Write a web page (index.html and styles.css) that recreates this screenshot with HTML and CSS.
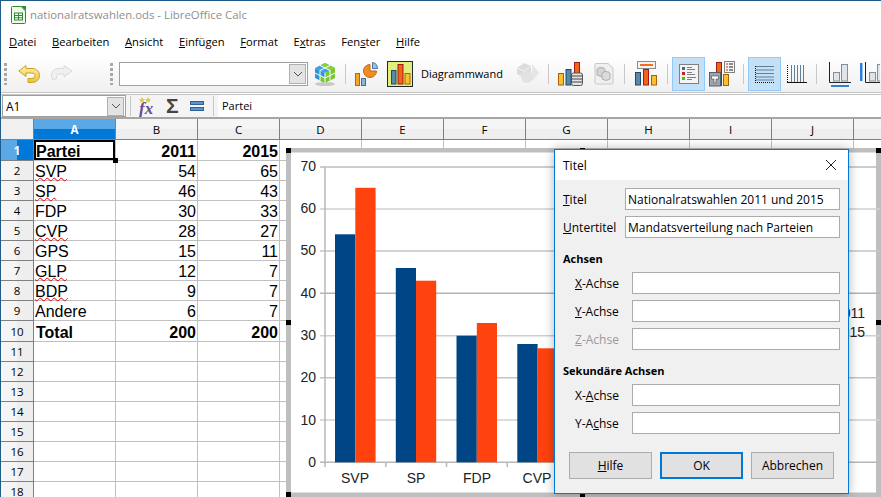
FILE: index.html
```html
<!DOCTYPE html>
<html lang="de">
<head>
    <meta charset="UTF-8">
    <title>nationalratswahlen.ods - LibreOffice Calc</title>
    <link rel="stylesheet" href="styles.css">
</head>
<body>
<div class="window">
    <div class="titlebar">
        <svg width="18" height="20" viewBox="0 0 18 20" class="app-icon">
            <path d="M1.5 2.5 Q1.5 1.5 2.5 1.5 H11 L15.5 6 V17.5 Q15.5 18.5 14.5 18.5 H2.5 Q1.5 18.5 1.5 17.5 Z" fill="#f2f8ee" stroke="#2f8a2f"/>
            <path d="M11 1 L16 1 L16 6 Z" fill="#2f8a2f"/>
            <rect x="4.5" y="8" width="8" height="7" fill="#fff" stroke="#2f8a2f"/>
            <path d="M4.5 10.5 H12.5 M4.5 12.8 H12.5 M8.5 8 V15" stroke="#2f8a2f"/>
        </svg>
        <span>nationalratswahlen.ods - LibreOffice Calc</span>
    </div>

    <div class="menubar">
        <span class="menu-item menu-datei"><u>D</u>atei</span>
        <span class="menu-item"><u>B</u>earbeiten</span>
        <span class="menu-item"><u>A</u>nsicht</span>
        <span class="menu-item"><u>E</u>infügen</span>
        <span class="menu-item"><u>F</u>ormat</span>
        <span class="menu-item">E<u>x</u>tras</span>
        <span class="menu-item">Fen<u>s</u>ter</span>
        <span class="menu-item"><u>H</u>ilfe</span>
    </div>

    <div class="toolbar">
        <span class="grip m3"></span>
        <svg class="m11" width="22" height="26" viewBox="18 60 22 26">
            <defs><linearGradient id="undoFill" x1="0" y1="0" x2="0" y2="1"><stop offset="0" stop-color="#fff2b0"/><stop offset="1" stop-color="#f0c030"/></linearGradient></defs>
            <path d="M18.8 70 L26 64.5 V67.5 H32 C37 67.5 39.5 71 39.5 74.5 C39.5 78.5 36.5 81.5 32 81.5 H28 V77.5 H31.5 C33.5 77.5 35 76 35 74.5 C35 73 33.5 72 31.5 72 H26 V75.5 Z" fill="url(#undoFill)" stroke="#c9a227"/>
        </svg>
        <svg class="m11" width="22" height="26" viewBox="51 60 22 26">
            <path d="M72 70 L64 64.5 V67.5 H59 C54 67.5 51.5 71 51.5 74 C51.5 76 52 78 53 79 L57 77 C56 75 56.5 73 59 73 H64 V76 Z" fill="#f0f0f0" stroke="#d9d9d9"/>
        </svg>
        <span class="grip m37"></span>
        <div class="combo m6">
            <span class="combo-btn"><svg width="10" height="6" viewBox="0 0 10 6"><path d="M1 1 L5 5 L9 1" fill="none" stroke="#555"/></svg></span>
        </div>
        <svg class="m6" width="22" height="26" viewBox="314 60 22 26">
            <ellipse cx="325" cy="83" rx="10" ry="2" fill="#c8c8c8"/>
            <path d="M325 62 L335 67 L325 72 L315 67 Z" fill="#3fa0e0"/>
            <path d="M325 62 L335 67 L330 69.5 L320 64.5 Z" fill="#8ccf3c"/>
            <path d="M315 67 L325 72 V82 L315 77 Z" fill="#2f96dc"/>
            <path d="M320 74.5 L325 77 V82 L320 79.5 Z" fill="#7cc62e"/>
            <path d="M335 67 L325 72 V82 L335 77 Z" fill="#7cc62e"/>
            <path d="M320 64.5 L330 69.5 M330 64.5 L320 69.5 M315 72 L325 77 L335 72 M320 69.5 V79.5 M330 69.5 V79.5 M325 72 V82" stroke="#fff" fill="none"/>
        </svg>
        <span class="sep m9"></span>
        <svg class="m8" width="24" height="26" viewBox="354 60 24 26">
            <rect x="355.5" y="72.5" width="4" height="12" fill="#f5a623" stroke="#c2620c"/>
            <rect x="361.5" y="77.5" width="4" height="7" fill="#8ab6de" stroke="#3a6ea5"/>
            <path d="M370 70 V63.5 A6.5 6.5 0 1 0 376.5 70 Z" fill="#f28c1e" stroke="#c9620e"/>
            <path d="M372.5 67.5 V61.5 A6 6 0 0 1 377.5 67.5 Z" fill="#9cc0e4" stroke="#4a78aa"/>
        </svg>
        <svg class="m9" width="26" height="26" viewBox="387 60 26 26">
            <rect x="387.5" y="60.5" width="25" height="25" fill="#dff07f" stroke="#1c2b2b"/>
            <rect x="391.5" y="69.5" width="4.5" height="13.5" fill="#5d87a8" stroke="#1f4a6e"/>
            <rect x="398" y="63.5" width="5" height="19.5" fill="#f0641e" stroke="#a01c10"/>
            <rect x="405" y="72.5" width="5" height="10.5" fill="#fbc02d" stroke="#a8600c"/>
        </svg>
        <span class="tool-label m8">Diagrammwand</span>
        <svg class="m13" width="24" height="26" viewBox="516 60 24 26">
            <path d="M517 67 L524 62 L531 65 V73 L524 77 L517 73 Z" fill="#dcdcdc"/>
            <path d="M517 67 L524 70 L531 65 M524 70 V77" stroke="#f2f2f2" fill="none"/>
            <path d="M532 63 L539 72 L532 80 Z" fill="#e6e6e6"/>
            <circle cx="527" cy="76" r="6" fill="#e2e2e2"/>
        </svg>
        <span class="sep m8"></span>
        <svg class="m8" width="26" height="26" viewBox="557 60 26 26">
            <rect x="558.5" y="72.5" width="5" height="11.5" fill="#fbc02d" stroke="#a8600c"/>
            <rect x="566" y="68.5" width="5" height="15.5" fill="#5d87a8" stroke="#1f4a6e"/>
            <rect x="574.5" y="61.5" width="5" height="12" fill="#f0641e" stroke="#a01c10"/>
            <rect x="571.5" y="72" width="11" height="12.5" rx="2" fill="#e4e4e4" stroke="#555"/>
            <path d="M571.5 75 H582.5 M571.5 78 H582.5 M571.5 81 H582.5" stroke="#444"/>
        </svg>
        <svg class="m11" width="20" height="26" viewBox="594 60 20 26">
            <path d="M595 63.5 Q595 62.5 596 62.5 H608 L613 67 V82 Q613 83 612 83 H596 Q595 83 595 82 Z" fill="#f0f0f0" stroke="#c8c8c8"/>
            <ellipse cx="601" cy="69" rx="4" ry="2.5" fill="#d4d4d4" stroke="#b0b0b0"/>
            <path d="M597 69 V74 Q601 77 605 74 V69" fill="#d4d4d4" stroke="#b0b0b0"/>
            <ellipse cx="606" cy="73" rx="4" ry="2.5" fill="#dcdcdc" stroke="#b0b0b0"/>
            <path d="M602 73 V78 Q606 81 610 78 V73" fill="#dcdcdc" stroke="#b0b0b0"/>
        </svg>
        <span class="sep m10"></span>
        <svg class="m9" width="24" height="26" viewBox="634 60 24 26">
            <rect x="637.5" y="60.5" width="18" height="7" fill="#f4f4f4" stroke="#8a8a8a"/>
            <rect x="640" y="63" width="13" height="2" fill="#f07020"/>
            <rect x="635.5" y="71.5" width="5" height="12.5" fill="#5d87a8" stroke="#1f4a6e"/>
            <rect x="643.5" y="68.5" width="5" height="15.5" fill="#f0641e" stroke="#a01c10"/>
            <rect x="651.5" y="74.5" width="5" height="9.5" fill="#fbc02d" stroke="#a8600c"/>
        </svg>
        <span class="sep m9"></span>
        <span class="tool-active m4">
            <svg width="22" height="22" viewBox="677 62 22 22">
                <rect x="678.5" y="63.5" width="19" height="19" fill="#f4f4f4" stroke="#808080"/>
                <rect x="681" y="66" width="3" height="3" fill="#3a6ea5"/>
                <rect x="681" y="71" width="3" height="3" fill="#c0242a"/>
                <rect x="681" y="76" width="3" height="3" fill="#6ab023"/>
                <path d="M686 66.5 H691 M686 68.5 H694 M686 71.5 H691 M686 73.5 H694 M686 76.5 H695 M686 78.5 H691" stroke="#808080"/>
            </svg>
        </span>
        <svg class="m3" width="28" height="26" viewBox="708 60 28 26">
            <rect x="716.5" y="61.5" width="5" height="23" fill="#f0641e" stroke="#a01c10"/>
            <rect x="723.5" y="73.5" width="5" height="11" fill="#fbc02d" stroke="#a8600c"/>
            <rect x="709.5" y="71.5" width="11" height="13.5" fill="#9aa5ae" stroke="#55606a"/>
            <path d="M711.5 75 H718.5 V78 H716 V82 H714 V78 H711.5 Z" fill="#fff" stroke="#444" stroke-width=".6"/>
            <rect x="724.5" y="60.5" width="10" height="11" fill="#f6f6f6" stroke="#808080"/>
            <path d="M726 63 H728 M726 66 H728 M726 69 H728" stroke="#b03030"/>
            <path d="M729 63 H733 M729 66 H733 M729 69 H733" stroke="#222"/>
        </svg>
        <span class="sep m7"></span>
        <span class="tool-active m4">
            <svg width="22" height="22" viewBox="753 62 22 22">
                <path d="M755 65.5 H773 M755 69 H773 M755 72.5 H773 M755 76 H773 M755 79 H773" stroke="#5d7f9c"/>
                <path d="M754.5 65 V82 M754 81.5 H774" stroke="#111" stroke-dasharray="1 1"/>
            </svg>
        </span>
        <svg class="m5" width="22" height="26" viewBox="786 60 22 26">
            <path d="M791.5 64 V81 M794.5 64 V81 M797.5 64 V81 M800.5 64 V81 M803.5 64 V81" stroke="#5d7f9c"/>
            <path d="M787.5 64 V81" stroke="#111" stroke-dasharray="1 1"/>
            <path d="M787 81.5 H807" stroke="#111"/>
        </svg>
        <span class="sep m8"></span>
        <svg class="m12" width="22" height="26" viewBox="830 60 22 26">
            <path d="M830.5 61 V81.5 H852" fill="none" stroke="#222"/>
            <rect x="834.5" y="71.5" width="6" height="8.5" fill="#e0e4e8" stroke="#7f8f9f"/>
            <rect x="842.5" y="63.5" width="6" height="16.5" fill="#e0e4e8" stroke="#7f8f9f"/>
            <rect x="832" y="84" width="18" height="2" fill="#2f80d8"/>
        </svg>
        <svg class="m8" width="21" height="26" viewBox="860 60 21 26">
            <rect x="861" y="62" width="2.5" height="18" fill="#2f80d8"/>
            <path d="M866.5 61 V81.5 H881" fill="none" stroke="#222"/>
            <rect x="870.5" y="71.5" width="6" height="8.5" fill="#e0e4e8" stroke="#7f8f9f"/>
            <rect x="878.5" y="63.5" width="6" height="16.5" fill="#e0e4e8" stroke="#7f8f9f"/>
        </svg>
    </div>

    <div class="formulabar">
        <div class="namebox">
            <span class="namebox-text">A1</span>
            <span class="combo-btn"><svg width="10" height="6" viewBox="0 0 10 6"><path d="M1 1 L5 5 L9 1" fill="none" stroke="#555"/></svg></span>
        </div>
        <span class="sep m4"></span>
        <svg class="m8" width="17" height="22" viewBox="139 95 17 22">
            <path d="M142 97 l1 2 2 .3-1.5 1.4.4 2-1.9-1-1.9 1 .4-2-1.5-1.4 2-.3Z M148 97 l1 2 2 .3-1.5 1.4.4 2-1.9-1-1.9 1 .4-2-1.5-1.4 2-.3Z" fill="#e8c53a"/>
            <text x="139" y="114" class="fx-glyph">fx</text>
        </svg>
        <span class="sigma m10">Σ</span>
        <svg class="m10" width="15" height="22" viewBox="190 95 15 22">
            <rect x="190.5" y="101.5" width="13" height="3" fill="#5b93d0" stroke="#2f5f96"/>
            <rect x="190.5" y="107.5" width="13" height="3" fill="#5b93d0" stroke="#2f5f96"/>
        </svg>
        <span class="sep m8"></span>
        <div class="formula-input m4">Partei</div>
    </div>

    <div class="sheet">
        <table class="grid">
            <colgroup>
                <col class="col-head"><col class="col-cell"><col class="col-cell"><col class="col-cell"><col class="col-cell"><col class="col-cell"><col class="col-cell"><col class="col-cell"><col class="col-cell"><col class="col-cell"><col class="col-cell"><col class="col-cell">
            </colgroup>
            <tr class="head-row"><th class="corner"></th><th class="active-col">A</th><th>B</th><th>C</th><th>D</th><th>E</th><th>F</th><th>G</th><th>H</th><th>I</th><th>J</th><th></th></tr>
            <tr class="tall"><th class="row-head active-row">1</th><td class="cursor num-left"><b>Partei</b></td><td class="n"><b>2011</b></td><td class="n"><b>2015</b></td><td></td><td></td><td></td><td></td><td></td><td></td><td></td><td></td></tr>
            <tr><th class="row-head">2</th><td><span class="spell">SVP</span></td><td class="n">54</td><td class="n">65</td><td></td><td></td><td></td><td></td><td></td><td></td><td></td><td></td></tr>
            <tr><th class="row-head">3</th><td><span class="spell">SP</span></td><td class="n">46</td><td class="n">43</td><td></td><td></td><td></td><td></td><td></td><td></td><td></td><td></td></tr>
            <tr><th class="row-head">4</th><td>FDP</td><td class="n">30</td><td class="n">33</td><td></td><td></td><td></td><td></td><td></td><td></td><td></td><td></td></tr>
            <tr><th class="row-head">5</th><td><span class="spell">CVP</span></td><td class="n">28</td><td class="n">27</td><td></td><td></td><td></td><td></td><td></td><td></td><td></td><td></td></tr>
            <tr><th class="row-head">6</th><td>GPS</td><td class="n">15</td><td class="n">11</td><td></td><td></td><td></td><td></td><td></td><td></td><td></td><td></td></tr>
            <tr><th class="row-head">7</th><td><span class="spell">GLP</span></td><td class="n">12</td><td class="n">7</td><td></td><td></td><td></td><td></td><td></td><td></td><td></td><td></td></tr>
            <tr><th class="row-head">8</th><td><span class="spell">BDP</span></td><td class="n">9</td><td class="n">7</td><td></td><td></td><td></td><td></td><td></td><td></td><td></td><td></td></tr>
            <tr><th class="row-head">9</th><td>Andere</td><td class="n">6</td><td class="n">7</td><td></td><td></td><td></td><td></td><td></td><td></td><td></td><td></td></tr>
            <tr class="tall"><th class="row-head">10</th><td class="total-name"><b>Total</b></td><td class="n"><b>200</b></td><td class="n"><b>200</b></td><td></td><td></td><td></td><td></td><td></td><td></td><td></td><td></td></tr>
            <tr><th class="row-head">11</th><td></td><td></td><td></td><td></td><td></td><td></td><td></td><td></td><td></td><td></td><td></td></tr>
            <tr><th class="row-head">12</th><td></td><td></td><td></td><td></td><td></td><td></td><td></td><td></td><td></td><td></td><td></td></tr>
            <tr><th class="row-head">13</th><td></td><td></td><td></td><td></td><td></td><td></td><td></td><td></td><td></td><td></td><td></td></tr>
            <tr><th class="row-head">14</th><td></td><td></td><td></td><td></td><td></td><td></td><td></td><td></td><td></td><td></td><td></td></tr>
            <tr><th class="row-head">15</th><td></td><td></td><td></td><td></td><td></td><td></td><td></td><td></td><td></td><td></td><td></td></tr>
            <tr><th class="row-head">16</th><td></td><td></td><td></td><td></td><td></td><td></td><td></td><td></td><td></td><td></td><td></td></tr>
            <tr><th class="row-head">17</th><td></td><td></td><td></td><td></td><td></td><td></td><td></td><td></td><td></td><td></td><td></td></tr>
            <tr><th class="row-head">18</th><td></td><td></td><td></td><td></td><td></td><td></td><td></td><td></td><td></td><td></td><td></td></tr>
        </table>

        <!-- chart is an object floating on the sheet, coordinates = page pixels -->
        <svg class="chart" width="595" height="349" viewBox="286 148 595 349">
            <rect x="288.5" y="150" width="590" height="345" fill="#fff" stroke="#bfbfbf" stroke-width="5"/>
            <g stroke="#cfcfcf" stroke-width="1.5">
                <path d="M320 167 H880" stroke="#bdbdbd"/>
                <path d="M320 209 H880"/>
                <path d="M320 251 H880" stroke="#c4c4c4"/>
                <path d="M320 293.3 H880" stroke="#b4b4b4"/>
                <path d="M320 335.7 H880"/>
                <path d="M320 377.7 H880" stroke="#c4c4c4"/>
                <path d="M320 420 H880"/>
                <path d="M320 462.3 H880" stroke="#b8b8b8"/>
                <path d="M325 167 V467 M385.8 462 V467 M446.5 462 V467 M507.2 462 V467" stroke="#b8b8b8"/>
            </g>
            <g fill="#004586">
                <rect x="335" y="234.3" width="20.3" height="228"/>
                <rect x="395.8" y="268" width="20.2" height="194.3"/>
                <rect x="456.5" y="335.7" width="20.3" height="126.6"/>
                <rect x="517.3" y="344" width="20.3" height="118.3"/>
            </g>
            <g fill="#ff420e">
                <rect x="355.3" y="187.8" width="20.3" height="274.5"/>
                <rect x="416" y="280.7" width="20.2" height="181.6"/>
                <rect x="476.8" y="323" width="20.2" height="139.3"/>
                <rect x="537.6" y="348.3" width="20.2" height="114"/>
            </g>
            <g class="chart-text" text-anchor="end">
                <text x="316" y="170.5">70</text>
                <text x="316" y="213">60</text>
                <text x="316" y="255">50</text>
                <text x="316" y="298">40</text>
                <text x="316" y="340">30</text>
                <text x="316" y="382">20</text>
                <text x="316" y="424.5">10</text>
                <text x="316" y="466.5">0</text>
                <text x="865" y="318">2011</text>
                <text x="865" y="337">2015</text>
            </g>
            <g class="chart-text" text-anchor="middle">
                <text x="355" y="483">SVP</text>
                <text x="416" y="483">SP</text>
                <text x="477" y="483">FDP</text>
                <text x="537" y="483">CVP</text>
            </g>
            <g fill="#000">
                <rect x="286" y="148" width="5" height="5"/>
                <rect x="580" y="148" width="5" height="5"/>
                <rect x="876" y="148" width="5" height="5"/>
                <rect x="286" y="320" width="5" height="5"/>
                <rect x="876" y="320" width="5" height="5"/>
                <rect x="286" y="492" width="5" height="5"/>
                <rect x="580" y="492" width="5" height="5"/>
            </g>
        </svg>

        <div class="dialog">
            <div class="dialog-title">
                <span>Titel</span>
                <svg width="12" height="12" viewBox="0 0 12 12"><path d="M1 1 L11 11 M11 1 L1 11" stroke="#222" stroke-width="1"/></svg>
            </div>
            <div class="dialog-body">
                <div class="field"><label><u>T</u>itel</label><input type="text" value="Nationalratswahlen 2011 und 2015"></div>
                <div class="field"><label><u>U</u>ntertitel</label><input type="text" value="Mandatsverteilung nach Parteien"></div>
                <div class="section-title">Achsen</div>
                <div class="field sub"><label><u>X</u>-Achse</label><input type="text"></div>
                <div class="field sub"><label><u>Y</u>-Achse</label><input type="text"></div>
                <div class="field sub disabled"><label><u>Z</u>-Achse</label><input type="text"></div>
                <div class="section-title">Sekundäre Achsen</div>
                <div class="field sub"><label>X-<u>A</u>chse</label><input type="text"></div>
                <div class="field sub"><label>Y-A<u>c</u>hse</label><input type="text"></div>
                <div class="dialog-buttons">
                    <button><u>H</u>ilfe</button>
                    <button class="default">OK</button>
                    <button>Abbrechen</button>
                </div>
            </div>
        </div>
    </div>
</div>
</body>
</html>
```

FILE: styles.css
```css
* {
    box-sizing: border-box;
}
html, body {
    margin: 0;
    padding: 0;
}
body {
    font-family: "Open Sans", "Noto Sans", sans-serif;
    font-size: 11px;
    color: #000;
    background: #fff;
}
.window {
    width: 881px;
    height: 497px;
    overflow: hidden;
    border-top: 1px solid #1f5c8c;
    border-left: 1px solid #1f5c8c;
}

/* title and menu */
.titlebar {
    height: 27px;
    display: flex;
    align-items: center;
    padding-left: 9px;
    color: #8f8f8f;
    font-size: 11.4px;
    background: #fff;
}
.titlebar span {
    margin-left: 2px;
}
.menubar {
    height: 27px;
    display: flex;
    align-items: center;
    padding-left: 8px;
    gap: 15.6px;
    font-size: 11.2px;
    background: #fff;
}

/* toolbar */
.toolbar {
    height: 38px;
    display: flex;
    align-items: center;
    border-bottom: 1px solid #c4c4c4;
    background: linear-gradient(#fff, #f0f0f0);
}
.toolbar svg, .formulabar svg {
    flex: none;
}
.grip {
    width: 3px;
    height: 22px;
    flex: none;
    background: repeating-linear-gradient(#a8a8a8 0 3px, transparent 3px 5px);
}
.sep {
    width: 1px;
    height: 20px;
    flex: none;
    background: #c8c8c8;
}
.combo {
    width: 189px;
    height: 24px;
    flex: none;
    display: flex;
    justify-content: flex-end;
    align-items: center;
    padding-right: 1px;
    background: #fff;
    border: 1.5px solid #a0a0a0;
}
.combo-btn {
    width: 17px;
    height: 20px;
    display: flex;
    align-items: center;
    justify-content: center;
    background: #e3e3e3;
    border: 1px solid #b0b0b0;
}
.tool-label {
    width: 82px;
    flex: none;
    white-space: nowrap;
}
.tool-active {
    width: 33px;
    height: 34px;
    flex: none;
    display: flex;
    align-items: center;
    justify-content: center;
    background: #c4e0f7;
    border: 1px solid #92c9f8;
}
.m3 { margin-left: 3px; }
.m4 { margin-left: 4px; }
.m5 { margin-left: 5px; }
.m6 { margin-left: 6px; }
.m7 { margin-left: 7px; }
.m8 { margin-left: 8px; }
.m9 { margin-left: 9px; }
.m10 { margin-left: 10px; }
.m11 { margin-left: 11px; }
.m12 { margin-left: 12px; }
.m13 { margin-left: 13px; }
.m37 { margin-left: 37px; }

/* formula bar */
.formulabar {
    height: 25px;
    margin-top: 1px;
    display: flex;
    align-items: center;
    padding-left: 1px;
    border-top: 1px solid #c4c4c4;
    border-bottom: 2px solid #a6a6a6;
    background: #f4f4f4;
}
.namebox {
    width: 124px;
    height: 22px;
    flex: none;
    display: flex;
    align-items: center;
    justify-content: space-between;
    padding: 0 1px 0 3px;
    background: #fff;
    border: 1px solid #a0a0a0;
}
.namebox-text {
    font-size: 12px;
}
.namebox .combo-btn {
    height: 19px;
    width: 17px;
}
.fx-glyph {
    font-family: "Liberation Serif", serif;
    font-style: italic;
    font-weight: bold;
    font-size: 17px;
    fill: #6a4a8c;
}
.sigma {
    width: 14px;
    flex: none;
    font-family: "Liberation Sans", sans-serif;
    font-weight: bold;
    font-size: 21px;
    line-height: 22px;
    color: #444;
}
.formula-input {
    flex: 1;
    height: 22px;
    line-height: 22px;
    padding-left: 4px;
    background: #fff;
}

/* sheet */
.sheet {
    position: relative;
}
.grid {
    table-layout: fixed;
    width: 935px;
    border-collapse: separate;
    border-spacing: 0;
    font-family: "Liberation Sans", Arial, sans-serif;
    font-size: 16px;
}
.col-head {
    width: 33px;
}
.col-cell {
    width: 82px;
}
.grid tr {
    height: 20px;
}
.grid tr.tall {
    height: 21px;
}
.grid tr.head-row {
    height: 21px;
}
.grid td {
    padding: 0 0 0 1px;
    border-right: 1px solid #c0c0c0;
    border-bottom: 1px solid #c0c0c0;
    white-space: nowrap;
    line-height: 16px;
    vertical-align: bottom;
}
.grid td.n {
    text-align: right;
    padding: 0 1px 0 0;
}
.grid td.total-name {
    padding-left: 2px;
}
.grid th {
    padding: 0;
    font-family: "Open Sans", "Noto Sans", sans-serif;
    font-size: 11.5px;
    font-weight: normal;
    border-right: 1px solid #808080;
    border-bottom: 1px solid #808080;
    background: linear-gradient(#f5f5f5 50%, #eeeeee 50%);
}
.grid th.corner {
    background: #f0f0f0;
}
.grid th.row-head {
    background: linear-gradient(to right, #f5f5f5 50%, #eeeeee 50%);
}
.grid th.active-col {
    color: #fff;
    font-weight: bold;
    background: linear-gradient(#5aa9e6 50%, #0078d7 50%);
}
.grid th.active-row {
    color: #fff;
    font-weight: bold;
    background: linear-gradient(to right, #5aa9e6 50%, #0078d7 50%);
}
.grid td.cursor {
    position: relative;
    box-shadow: inset 0 0 0 2px #000;
    padding-left: 2px;
}
.grid td.cursor::after {
    content: "";
    position: absolute;
    right: -3px;
    bottom: -3px;
    width: 5px;
    height: 5px;
    background: #000;
}
.spell {
    text-decoration: underline wavy #e80000 1px;
    text-underline-offset: 0;
    text-decoration-skip-ink: none;
}

/* chart floats over the cells */
.chart {
    position: absolute;
    left: 285px;
    top: 29px;
}
.chart-text {
    font-family: "Liberation Sans", Arial, sans-serif;
    font-size: 14px;
    fill: #222;
}

/* dialog floats over the chart */
.dialog {
    position: absolute;
    left: 553px;
    top: 30px;
    width: 295px;
    height: 345px;
    background: #f0f0f0;
    border: 1px solid #0078d7;
    box-shadow: 0 0 10px rgba(0, 0, 0, .3);
    font-size: 12px;
}
.dialog-title {
    height: 30px;
    display: flex;
    align-items: center;
    justify-content: space-between;
    padding: 0 11px 0 8px;
    background: #fff;
}
.dialog-body {
    padding: 8px 8px 0;
}
.field {
    height: 22px;
    margin-bottom: 6px;
    display: flex;
    align-items: center;
}
.field label {
    width: 62px;
    flex: none;
}
.field.sub {
    padding-left: 12px;
}
.field.sub label {
    width: 57px;
}
.field input {
    flex: 1;
    min-width: 0;
    height: 22px;
    padding: 0 2px;
    border: 1px solid #ababab;
    background: #fff;
    font: inherit;
    color: #000;
    outline: none;
}
.field.disabled label {
    color: #9a9a9a;
}
.section-title {
    height: 18px;
    line-height: 18px;
    margin: 12px 0 4px;
    font-size: 11px;
    font-weight: bold;
}
.dialog-buttons {
    display: flex;
    gap: 8px;
    margin: 18px 6px 0;
}
.dialog-buttons button {
    width: 83px;
    height: 27px;
    padding: 0;
    font: inherit;
    color: #000;
    background: #e1e1e1;
    border: 1px solid #adadad;
}
.dialog-buttons button.default {
    border: 2px solid #0078d7;
}
```
